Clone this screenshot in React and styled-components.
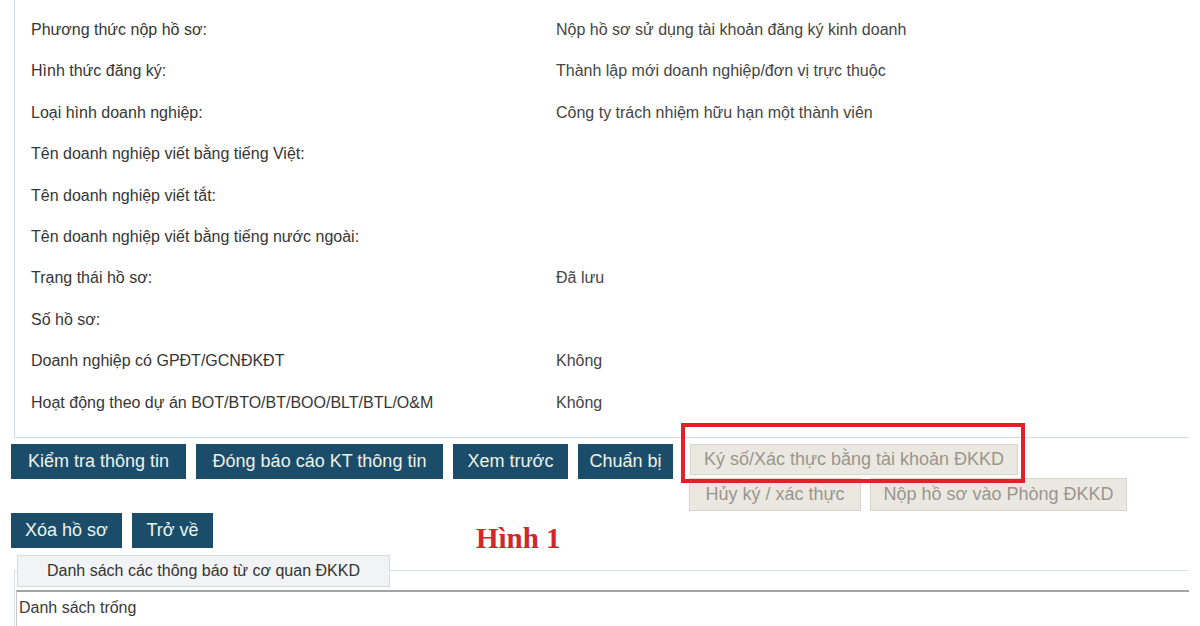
import React from "react";
import styled, { createGlobalStyle } from "styled-components";

const GlobalStyle = createGlobalStyle`
  html, body { margin: 0; padding: 0; background: #ffffff; }
  body { font-family: "Liberation Sans", Arial, sans-serif; color: #3a3a3a; }
  * { box-sizing: border-box; }
`;

const Page = styled.div`
  width: 1200px;
  padding: 0 11px;
`;

const InfoPanel = styled.div`
  margin-left: 3px;
  border-left: 1px solid #cfdce5;
  border-bottom: 1px solid #d6dde2;
  padding: 9px 0 14px 16px;
`;

const InfoRow = styled.div`
  display: grid;
  grid-template-columns: 525px 1fr;
  height: 41.4px;
  line-height: 41.4px;
  font-size: 16px;
`;

const Label = styled.div`
  color: #363636;
  white-space: nowrap;
`;

const Value = styled.div`
  color: #454545;
  white-space: nowrap;
`;

const ActionRow = styled.div`
  display: flex;
  align-items: flex-start;
  gap: 10px;
  margin-top: ${(p) => p.$top || 0}px;
`;

const DarkButton = styled.button`
  width: ${(p) => p.$w}px;
  height: 35px;
  padding: 0;
  border: none;
  background: #1b4d6b;
  color: #eef3ea;
  font-family: "Liberation Sans", Arial, sans-serif;
  font-size: 18px;
  white-space: nowrap;
  flex: none;
`;

const DisabledGroup = styled.div`
  margin-left: 7px;
  display: flex;
  flex-direction: column;
  gap: 3px;
`;

const DisabledLine = styled.div`
  display: flex;
  gap: 9px;
  margin-left: ${(p) => p.$shift || 0}px;
`;

const GreyButton = styled.button`
  width: ${(p) => p.$w}px;
  height: ${(p) => p.$h || 31}px;
  padding: 0;
  background: #ebe8e1;
  border: 1px solid #d9d5cc;
  color: #9a968e;
  font-family: "Liberation Sans", Arial, sans-serif;
  font-size: 18px;
  white-space: nowrap;
  flex: none;
`;

const Highlighted = styled.div`
  position: relative;
  width: max-content;
`;

const RedFrame = styled.div`
  position: absolute;
  top: -21px;
  left: -9px;
  right: -7px;
  bottom: -8px;
  border: 4px solid #e0232b;
  pointer-events: none;
`;

const Caption = styled.div`
  margin: 11px 0 0 253px;
  font-family: "Liberation Serif", "Times New Roman", serif;
  font-weight: bold;
  font-size: 29px;
  line-height: 29px;
  color: #d3262a;
  white-space: nowrap;
`;

const NoticeSet = styled.fieldset`
  margin: 2px 0 0 3px;
  padding: 0;
  border: 1px solid #dbe0e4;
  border-right: none;
  border-bottom: none;
  min-width: 0;
`;

const NoticeLegend = styled.legend`
  margin-left: 2px;
  padding: 0 29px;
  height: 32px;
  line-height: 30px;
  text-align: left;
  font-size: 16px;
  color: #333;
  background: #f1f3f5;
  border: 1px solid #d4dadf;
`;

const EmptyList = styled.div`
  margin: 3px 0 0 1px;
  border-top: 2px solid #a4a4a4;
  border-left: 1px solid #c9c9c9;
  padding: 6px 0 0 2px;
  min-height: 70px;
  font-size: 16px;
  line-height: 20px;
  color: #3a3a3a;
`;

const rows = [
  ["Phương thức nộp hồ sơ:", "Nộp hồ sơ sử dụng tài khoản đăng ký kinh doanh"],
  ["Hình thức đăng ký:", "Thành lập mới doanh nghiệp/đơn vị trực thuộc"],
  ["Loại hình doanh nghiệp:", "Công ty trách nhiệm hữu hạn một thành viên"],
  ["Tên doanh nghiệp viết bằng tiếng Việt:", ""],
  ["Tên doanh nghiệp viết tắt:", ""],
  ["Tên doanh nghiệp viết bằng tiếng nước ngoài:", ""],
  ["Trạng thái hồ sơ:", "Đã lưu"],
  ["Số hồ sơ:", ""],
  ["Doanh nghiệp có GPĐT/GCNĐKĐT", "Không"],
  ["Hoạt động theo dự án BOT/BTO/BT/BOO/BLT/BTL/O&M", "Không"],
];

export default function App() {
  return (
    <>
      <GlobalStyle />
      <Page>
        <InfoPanel>
          {rows.map(([l, v]) => (
            <InfoRow key={l}>
              <Label>{l}</Label>
              <Value>{v}</Value>
            </InfoRow>
          ))}
        </InfoPanel>

        <ActionRow $top={6}>
          <DarkButton $w={175}>Kiểm tra thông tin</DarkButton>
          <DarkButton $w={247}>Đóng báo cáo KT thông tin</DarkButton>
          <DarkButton $w={115}>Xem trước</DarkButton>
          <DarkButton $w={95}>Chuẩn bị</DarkButton>
          <DisabledGroup>
            <Highlighted>
              <GreyButton $w={328}>Ký số/Xác thực bằng tài khoản ĐKKD</GreyButton>
              <RedFrame />
            </Highlighted>
            <DisabledLine $shift={-1}>
              <GreyButton $w={172} $h={33}>Hủy ký / xác thực</GreyButton>
              <GreyButton $w={257} $h={33}>Nộp hồ sơ vào Phòng ĐKKD</GreyButton>
            </DisabledLine>
          </DisabledGroup>
        </ActionRow>

        <ActionRow $top={2}>
          <DarkButton $w={111}>Xóa hồ sơ</DarkButton>
          <DarkButton $w={81}>Trở về</DarkButton>
          <Caption>Hình 1</Caption>
        </ActionRow>

        <NoticeSet>
          <NoticeLegend>Danh sách các thông báo từ cơ quan ĐKKD</NoticeLegend>
          <EmptyList>Danh sách trống</EmptyList>
        </NoticeSet>
      </Page>
    </>
  );
}
